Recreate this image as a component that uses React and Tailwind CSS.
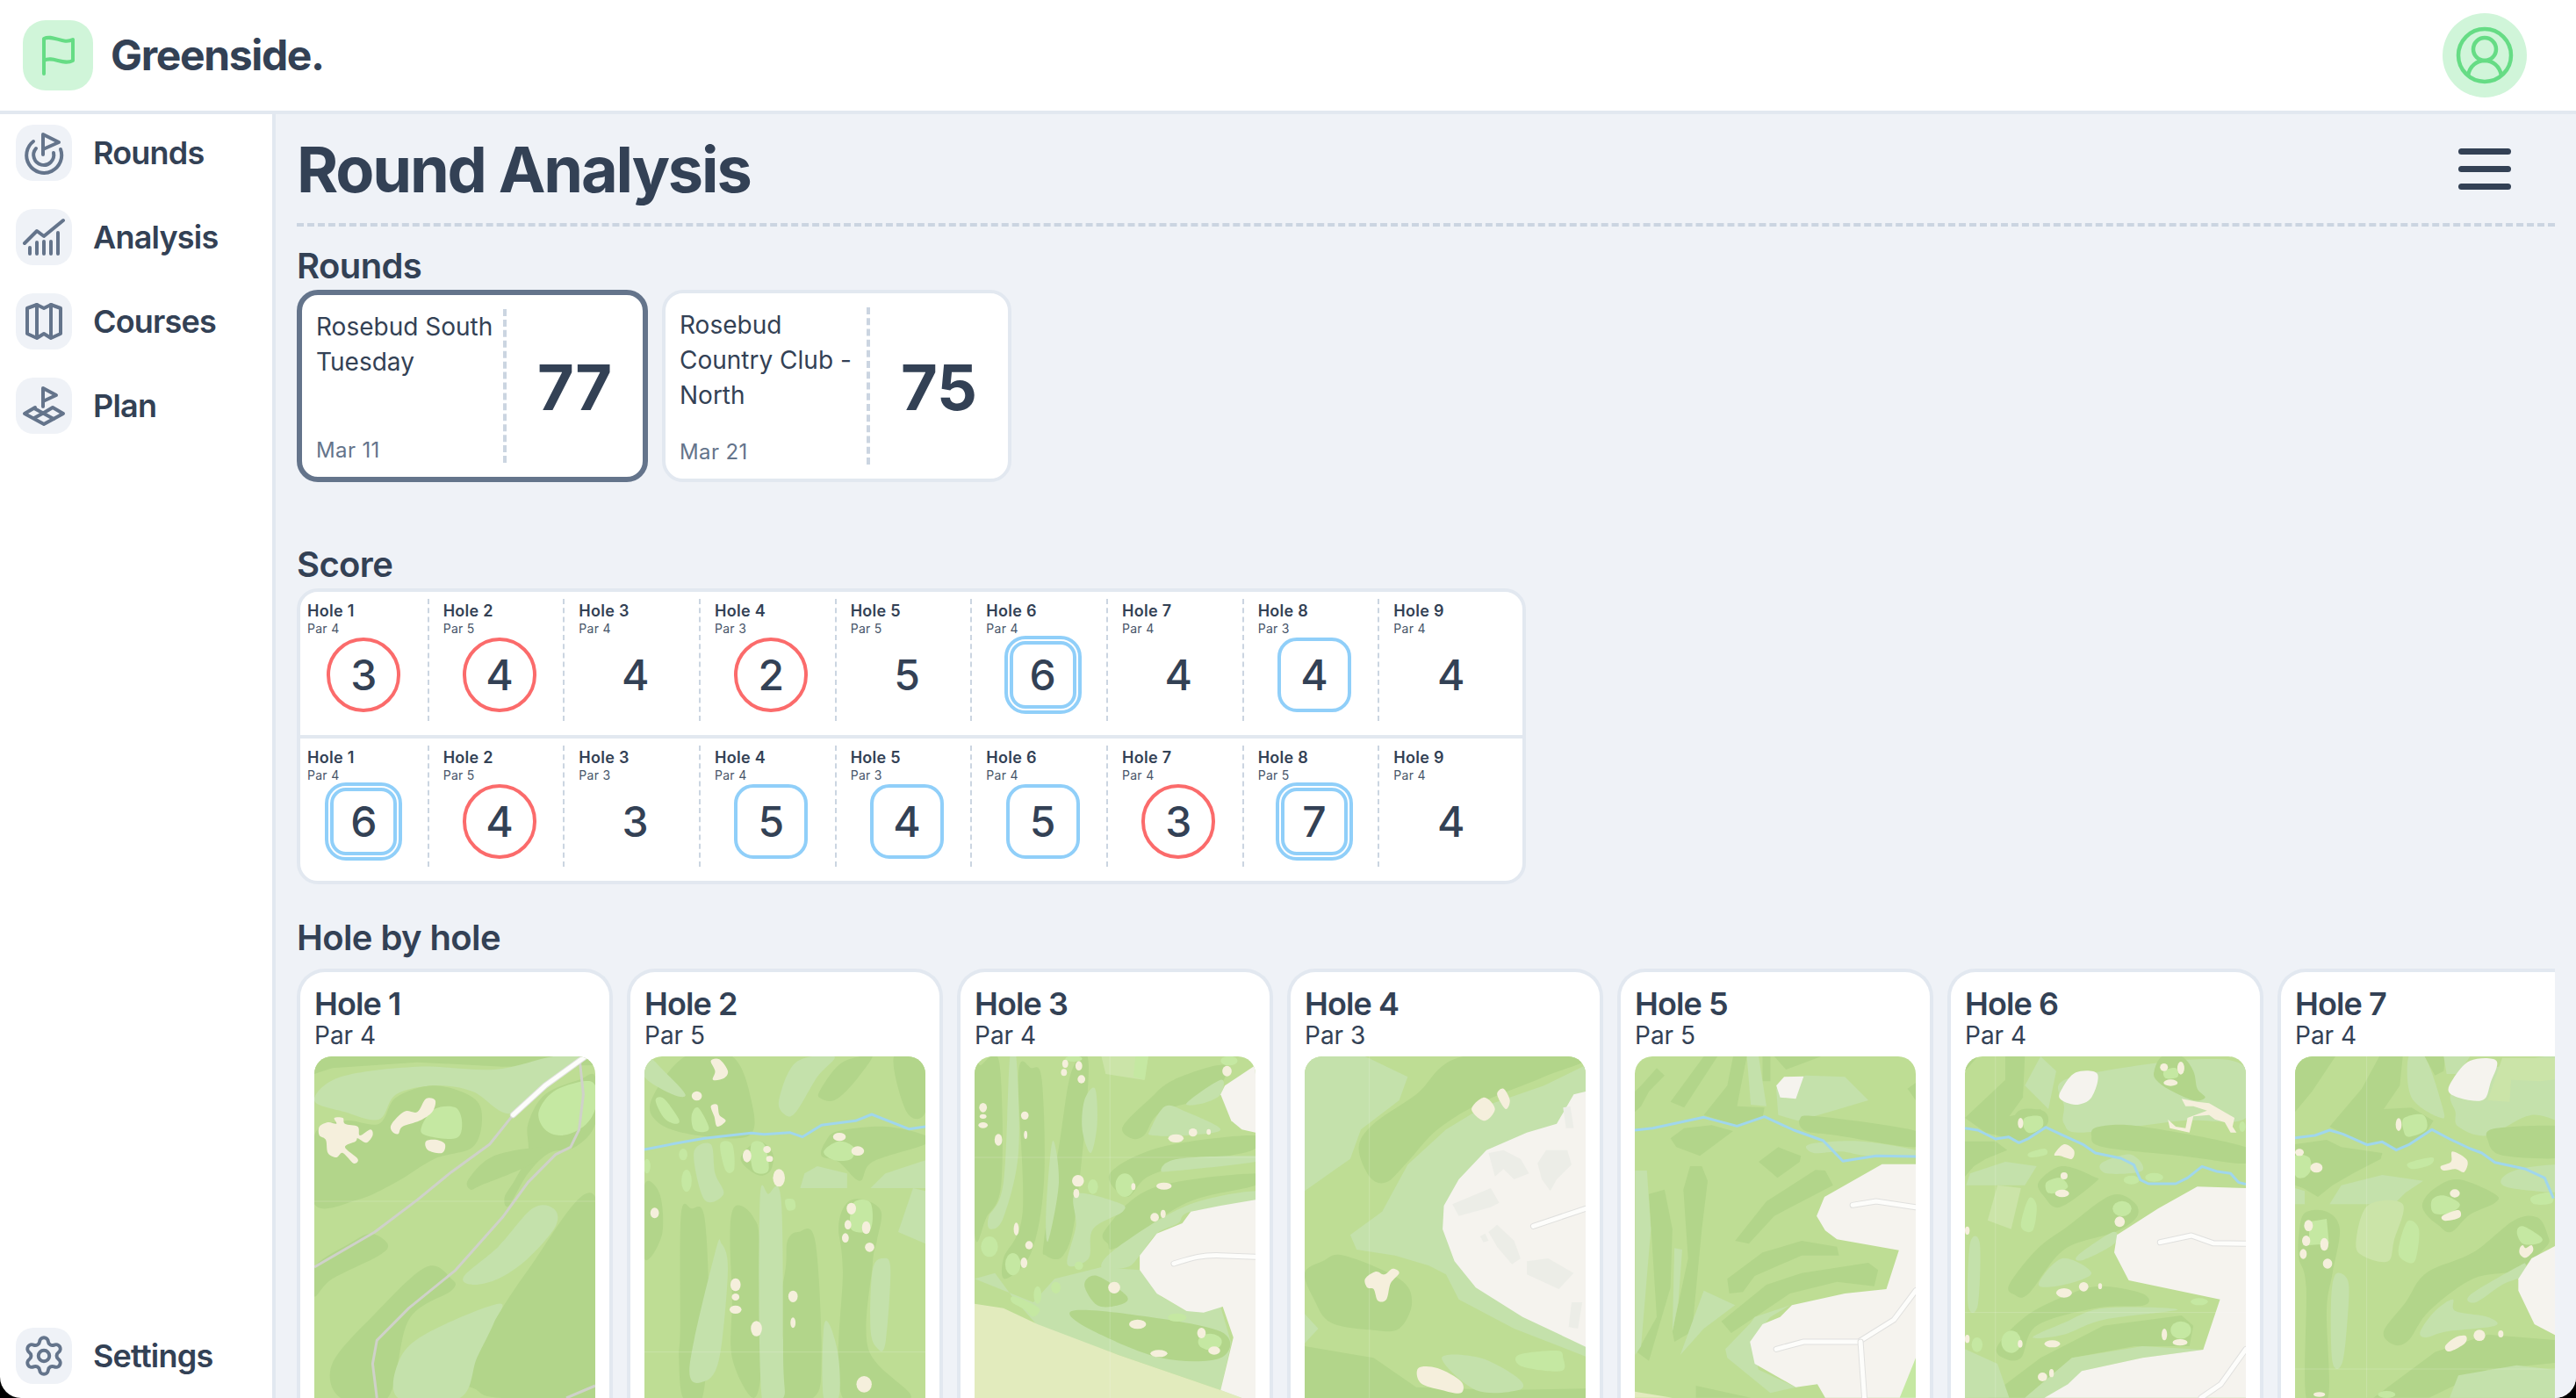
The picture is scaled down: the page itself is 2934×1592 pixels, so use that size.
// App.jsx - Greenside round analysis page
import React from "react";
import { Settings } from "lucide-react";

const COLORS = {
  d: "#b2d58a", // dark rough
  l: "#c4e1ab", // light fairway
  p: "#cbe4a8", // pale patch
  g: "#c5e8a2", // green
  s: "#f5efdc", // sand
  w: "#f5f3ee", // land
  b: "#ecede7", // building
  y: "#e2ebbd", // field
};

// closed catmull-rom through the points so blobs look hand drawn
const smooth = (pts) => {
  const n = pts.length;
  let d = `M${pts[0][0]},${pts[0][1]}`;
  for (let i = 0; i < n; i++) {
    const p0 = pts[(i - 1 + n) % n];
    const p1 = pts[i];
    const p2 = pts[(i + 1) % n];
    const p3 = pts[(i + 2) % n];
    const c1 = [p1[0] + (p2[0] - p0[0]) / 6, p1[1] + (p2[1] - p0[1]) / 6];
    const c2 = [p2[0] - (p3[0] - p1[0]) / 6, p2[1] - (p3[1] - p1[1]) / 6];
    d += `C${c1[0]},${c1[1]} ${c2[0]},${c2[1]} ${p2[0]},${p2[1]}`;
  }
  return d + "Z";
};

const parse = (s) => s.trim().split(/\s+/).map((p) => p.split(",").map(Number));

const HOLE_MAPS = [
  {
    vb: "58 370 660 1167",
    layers: [
      ["d", "58,370 718,370 718,400 500,405 300,390 100,410 58,430", "x"],
      ["l", "58,520 120,440 300,405 480,415 620,370 700,370 620,450 520,565 430,490 340,470 250,500 210,585 130,560"],
      ["d", "58,640 130,590 210,600 250,510 340,470 430,510 452,580 430,680 340,720 250,800 160,860 58,875"],
      ["g", "310,610 340,550 390,545 405,600 390,650 320,640"],
      ["s", "240,600 270,558 300,560 320,515 342,520 335,560 305,590 265,610 255,635 240,625"],
      ["s", "320,660 345,655 365,670 358,700 325,690"],
      ["s", "70,610 90,595 110,600 105,580 125,580 130,600 160,610 165,640 190,620 195,640 180,665 160,650 155,660 130,680 160,720 150,735 125,700 110,715 90,700 85,655 70,640"],
      ["d", "560,600 600,500 680,450 718,440 718,600 670,680 610,700 560,770 515,880 505,850 530,790 560,700"],
      ["g", "585,560 620,490 690,455 718,470 718,550 690,610 640,640 600,620"],
      ["d", "420,790 480,710 600,680 590,720 520,770 450,810 425,825"],
      ["d", "418,1440 560,1100 718,850 718,1537 500,1537 440,1510"],
      ["l", "410,1120 490,1020 570,890 620,890 625,950 560,1060 490,1130 430,1150"],
      ["d", "58,1090 140,1010 190,975 230,1010 210,1050 100,1130 58,1190"],
      ["d", "100,1420 200,1250 320,1090 380,1130 380,1170 280,1270 230,1537 120,1537"],
      ["l", "260,1400 330,1310 490,1215 480,1280 440,1400 400,1537 255,1537"],
    ],
    grey: ["M58,1090 L200,970 L300,860 L380,765 L470,670 L525,570", "M682,390 L690,500 L680,620 L660,680 L625,705 L560,800 L500,920 L390,1100 L280,1230 L205,1340 L195,1420 L205,1537", "M650,1537 L718,1495"],
    roads: ["M525,570 L600,470 L695,370"],
    seams: ["M58,865 H718"],
  },
  {
    vb: "834 370 660 1167",
    layers: [
      ["d", "930,370 1040,370 1085,520 1080,640 960,640 870,600 850,520"],
      ["l", "840,370 880,420 930,500 900,500 834,440"],
      ["l", "1150,520 1190,390 1280,370 1240,440 1190,560 1165,570"],
      ["d", "1245,490 1290,400 1340,370 1370,370 1320,470 1280,520 1250,515"],
      ["d", "1420,370 1494,370 1494,560 1450,560"],
      ["g", "860,520 880,515 915,585 905,600 880,580"],
      ["g", "945,570 960,545 985,610 975,628 950,620"],
      ["s", "990,385 1010,380 1030,420 1020,445 995,450 1000,420"],
      ["s", "990,540 1005,535 1010,570 1025,590 1005,610 998,575"],
      ["d", "1060,720 1100,660 1135,700 1130,760 1100,775"],
      ["g", "1085,670 1115,670 1125,760 1090,760"],
      ["d", "1260,660 1290,625 1400,610 1494,640 1494,670 1370,730 1340,795 1290,730 1250,710"],
      ["g", "1255,695 1290,660 1325,680 1320,720 1280,725"],
      ["l", "1200,820 1210,770 1240,745 1310,770 1310,820", "x"],
      ["l", "1365,820 1400,770 1494,725 1494,820", "x"],
      ["l", "1430,970 1465,820 1494,830 1494,1010", "x"],
      ["l", "950,700 990,670 1000,770 1020,840 975,860"],
      ["g", "1012,670 1040,670 1045,755 1025,760"],
      ["d", "918,1300 920,910 945,890 975,920 985,1250 970,1537 925,1537 915,1400"],
      ["d", "1035,1000 1040,900 1060,880 1090,920 1105,1010 1110,1400 1090,1537 1040,1400 1040,1200"],
      ["d", "1165,1100 1170,1000 1195,970 1235,1000 1250,1400 1230,1537 1130,1537 1140,1300"],
      ["d", "1300,1100 1290,950 1310,870 1350,860 1390,900 1380,1000 1370,1080 1360,1370 1460,1537 1300,1537"],
      ["d", "834,810 870,840 875,980 834,1060"],
      ["l", "1105,870 1125,840 1155,860 1160,1400 1160,1537 1110,1537"],
      ["l", "1000,1040 1015,1010 1030,1100 1010,1400 975,1480 940,1430"],
      ["l", "1370,1100 1395,1060 1412,1100 1400,1350 1380,1365 1365,1300"],
      ["l", "1255,1300 1270,1290 1290,1400 1290,1537 1255,1537"],
      ["g", "1325,870 1365,870 1365,960 1320,960"],
      ["g", "1165,860 1185,860 1188,890 1170,895"],
      ["g", "925,705,10,20 933,795,12,38 840,745,8,25", "o"],
      ["s", "957,505,12,16 1075,710,10,22 1122,688,9,12 1128,720,8,10 1150,785,14,30 1292,645,15,14 1335,693,15,16 858,905,10,18 1048,1150,12,22 1048,1192,9,12 1048,1235,14,14 1097,1300,13,26 1183,1190,11,20 1183,1280,6,18 1350,1490,18,28 1320,890,11,20 1312,945,8,16 1355,955,10,22 1306,990,8,16 1363,1022,11,16", "o"],
    ],
    water: ["M834,688 L905,668 L975,650 L1085,632 L1115,636 L1175,630 L1205,645 L1250,605 L1330,590 L1368,568 L1455,618 L1494,610"],
    seams: ["M834,1380 H1494"],
  },
  {
    vb: "62 370 660 1167",
    layers: [
      ["d", "75,400 120,390 125,800 90,920 62,970 62,380"],
      ["d", "165,430 195,410 220,450 225,800 195,1040 135,1130 130,1060 175,900"],
      ["d", "260,680 290,420 330,400 300,900 270,1050 230,1050 225,1000"],
      ["l", "145,372 160,372 165,700 130,920 100,960 95,920 130,800"],
      ["l", "320,520 345,480 350,600 335,700 315,620"],
      ["l", "245,660 260,800 235,1000 230,900"],
      ["p", "360,370 470,370 460,450 370,430", "x"],
      ["g", "440,370 470,370 462,450 435,440", "x"],
      ["d", "410,610 470,520 530,450 650,400 620,500 500,560 460,640 430,650"],
      ["l", "475,620 510,540 560,560 640,620 560,640 480,640"],
      ["l", "560,530 640,450 640,500 600,530"],
      ["d", "380,770 500,680 715,640 715,690 580,730 470,780 420,850"],
      ["l", "500,760 540,720 722,710 722,730 540,760"],
      ["d", "370,960 480,820 722,770 722,810 560,870 400,1020 375,1010"],
      ["l", "300,840 400,870 410,900 340,960 330,1060 280,1080 300,950"],
      ["l", "400,1020 560,880 722,830 722,870 570,900 540,940 490,975 450,1050 420,1090 360,1090"],
      ["l", "62,1130 110,1110 150,1190 210,1290 400,1390 640,1510 665,1350 640,1225 560,1240 500,1190 450,1100 360,1090 250,1130 200,1210", "x"],
      ["b2", "290,1240 420,1250 640,1310 640,1400 500,1400 330,1300"],
      ["b2", "320,1150 350,1120 420,1190 400,1220 350,1220"],
      ["y", "62,1215 130,1230 210,1285 400,1390 640,1510 690,1537 62,1537", "x"],
      ["w", "722,400 650,470 640,500 665,590 690,620 722,630", "x"],
      ["w", "722,860 640,880 570,900 550,940 490,975 450,1050 450,1100 490,1180 560,1240 600,1245 645,1225 670,1330 640,1510 690,1537 722,1537", "x"],
      ["g", "152,1190 190,1210 215,1235 200,1260 180,1235 150,1210"],
      ["g", "415,810,22,40 97,1020,20,35 152,1080,18,38 340,815,12,25 307,1085,10,14 253,1160,11,20 210,1185,9,30 538,1262,22,14 615,1345,28,28 660,385,20,16 295,378,20,10", "o"],
      ["s", "82,545,9,16 82,575,8,8 82,605,11,10 118,655,9,20 180,572,9,14 182,638,4,14 275,395,7,14 307,402,8,16 272,425,7,12 313,448,9,14 655,420,11,18 535,650,18,14 575,630,10,14 612,628,5,10 305,795,14,20 301,838,7,16 435,815,5,12 507,813,18,12 485,920,10,15 505,908,6,14 160,960,6,22 190,1015,9,14 178,1075,8,18 390,1160,14,20 445,1285,20,16 595,1315,10,18 625,1375,14,14 495,1385,20,12", "o"],
    ],
    roads: ["M530,1078 C570,1060 590,1048 640,1050 L722,1055"],
    seams: ["M380,370 V1537", "M62,715 H722"],
  },
  {
    vb: "838 370 660 1167",
    layers: [
      ["l", "838,370 980,370 1080,440 1060,520 970,620 945,720 838,830", "x"],
      ["d", "965,680 1000,600 1100,500 1210,370 1498,370 1400,440 1250,530 1150,620 1080,730 1030,800 990,780"],
      ["l", "1498,400 1400,470 1260,540 1170,620 1080,740 1020,900 945,980 960,1030 1050,1050 1130,1085 1170,1115 1200,1200 1330,1300 1498,1395", "x"],
      ["w", "1498,490 1470,500 1430,600 1360,630 1265,690 1200,790 1165,880 1162,960 1190,1070 1240,1160 1350,1260 1498,1362", "x"],
      ["b", "1270,700 1305,690 1345,720 1365,770 1330,790 1305,755 1285,780", "x"],
      ["b", "1385,735 1405,690 1455,690 1465,740 1430,790 1415,830 1395,790", "x"],
      ["b", "1185,875 1275,820 1295,870 1275,885 1200,915", "x"],
      ["b", "1270,970 1290,945 1330,1000 1345,1060 1325,1080 1290,1020", "x"],
      ["b", "1360,1070 1410,1060 1470,1110 1435,1165 1360,1115", "x"],
      ["b", "1445,545 1462,540 1470,615 1452,615", "x"],
      ["b", "1465,1210 1490,1210 1480,1300 1458,1295", "x"],
      ["b", "1250,985 1262,975 1270,1000 1258,1005", "x"],
      ["d", "838,1110 880,1070 930,1050 1060,1130 1090,1210 1060,1300 1000,1305 900,1280 860,1200"],
      ["l", "838,1250 870,1300 838,1350", "x"],
      ["d", "838,1360 1000,1400 1100,1500 1300,1510 1498,1505 1498,1537 838,1537", "x"],
      ["l", "1160,1400 1250,1400 1340,1470 1340,1510 1240,1510"],
      ["g", "1340,1390 1430,1375 1445,1400 1440,1445 1350,1430"],
      ["s", "1105,1435 1150,1435 1205,1480 1205,1520 1160,1510 1110,1485"],
      ["s", "980,1130 1005,1105 1025,1115 1045,1095 1060,1110 1040,1145 1030,1200 1010,1205 1000,1165 985,1160"],
      ["s", "1230,550 1260,510 1285,550 1260,590"],
      ["s", "1290,500 1305,480 1320,520 1310,550"],
    ],
    roads: ["M1375,950 L1498,890"],
    seams: ["M990,370 V1537"],
  },
  {
    vb: "4 10 717 1167",
    layers: [
      ["d", "20,110 60,50 80,75 40,130 20,180 4,200 4,130", "x"],
      ["d", "95,165 180,10 215,10 130,185", "x"],
      ["d", "180,210 240,110 255,10 290,10 275,110 265,180 335,185 330,220 270,250", "x"],
      ["d", "330,10 350,10 350,95 330,95", "x"],
      ["d", "360,10 480,10 390,55", "x"],
      ["d", "700,120 721,100 721,160", "x"],
      ["l", "290,10 320,10 340,180 300,175", "x"],
      ["l", "365,120 440,75 540,80 600,160 500,200 420,230 370,210", "x"],
      ["w", "365,110 385,80 435,78 415,155 375,150", "x"],
      ["d", "425,225 470,215 721,265 721,320 520,280 440,265"],
      ["l", "450,310 580,300 721,330 721,350 600,350 530,335 460,340"],
      ["d", "95,290 130,255 200,245 255,265 170,350 110,320", "x"],
      ["d", "320,370 370,320 428,350 425,370 368,425", "x"],
      ["d", "128,465 145,385 175,385 190,435 175,600 150,950 105,985 100,950 140,700", "x"],
      ["d", "40,480 80,465 100,600 95,800 40,1050 10,1020 60,900", "x"],
      ["d", "260,640 340,505 465,398 490,400 510,450 360,555 295,650", "x"],
      ["d", "240,770 330,680 430,640 520,660 525,690 430,690 310,760 280,815 245,820", "x"],
      ["d", "225,915 340,790 430,750 600,715 625,740 615,795 520,780 400,820 250,955", "x"],
      ["l", "5,400 35,400 45,600 20,1000 5,1030", "x"],
      ["l", "105,665 125,670 115,850 100,950", "x"],
      ["l", "120,1030 180,810 260,860 180,940", "x"],
      ["l", "235,1010 300,920 310,900 400,860 350,900 300,980 320,1080 415,1140 350,1160 240,1040", "x"],
      ["w", "635,378 721,378 721,1176 490,1176 470,1130 415,1140 310,1060 298,985 330,925 375,900 405,860 540,820 646,805 678,672 520,635 490,605 468,555 488,490", "x"],
      ["g", "680,1176 721,1040 721,1176", "x"],
      ["d", "160,1135 300,1176 160,1176", "x"],
      ["y", "4,1176 4,1155 100,1176", "x"],
    ],
    water: ["M4,262 L50,255 L180,218 L265,248 L335,216 L410,262 L485,298 L535,368 L620,350 L721,352"],
    roads: ["M560,518 L620,505 L721,525", "M365,1010 L435,985 L575,985 L665,910 L721,810", "M580,985 L590,1176"],
  },
  {
    vb: "847 10 717 1167",
    layers: [
      ["d", "847,10 880,10 847,60", "x"],
      ["d", "847,220 950,90 950,10 1000,10 995,150 960,215 1040,190 1060,230 1020,280 985,300 900,270", "x"],
      ["l", "1040,10 1080,60 1060,190 1000,110", "x"],
      ["l", "1100,180 1090,100 1200,60 1440,20 1564,50 1564,220 1400,230 1150,270 1100,240"],
      ["w", "1095,120 1130,65 1185,70 1170,150 1130,175 1090,155"],
      ["d", "1330,60 1350,10 1400,10 1430,60 1440,120 1460,150 1430,160 1370,125 1335,90"],
      ["g", "1355,60 1385,50 1390,80 1360,85"],
      ["s", "1400,155 1440,165 1470,170 1535,220 1530,250 1540,270 1525,270 1510,235 1485,225 1470,210 1430,215 1420,270 1370,255 1365,225 1385,250 1410,255 1415,220 1465,195 1430,180 1410,180", "x"],
      ["d", "1170,280 1190,250 1300,250 1564,320 1564,375 1400,350 1200,320"],
      ["d", "965,260 985,195 1045,195 1060,230 1040,265 990,300"],
      ["g", "1000,220 1040,215 1045,250 1015,272 998,255"],
      ["d", "847,300 925,300 955,330 900,360 870,385 847,420", "x"],
      ["l", "850,450 860,410 950,370 1030,385 1000,450", "x"],
      ["p", "905,570 930,450 990,460 965,600", "x"],
      ["g", "990,590 1010,495 1030,520 1020,605"],
      ["g", "1010,340 1050,325 1055,345 1015,355"],
      ["s", "1075,345 1100,310 1125,330 1120,360 1090,350"],
      ["l", "1195,375 1270,345 1300,400 1210,410"],
      ["d", "1035,440 1095,385 1175,420 1180,440 1090,525 1050,490"],
      ["g", "1055,440 1090,425 1110,455 1085,475 1058,475"],
      ["d", "960,790 1030,670 1110,590 1220,485 1280,510 1285,560 1230,610 1100,670 1010,820 975,825"],
      ["l", "1135,690 1225,610 1228,650 1150,705"],
      ["l", "1035,790 1095,700 1170,750 1100,790"],
      ["l", "855,860 860,650 885,650 880,860"],
      ["d", "930,1000 1000,900 1100,830 1190,795 1300,820 1305,860 1180,870 1030,930 990,1040 945,1040"],
      ["l", "1020,970 1100,920 1200,870 1390,875 1200,910 1100,960"],
      ["d", "905,1176 1040,1040 1200,930 1400,895 1430,930 1420,1000 1280,1000 1120,1040 1000,1176", "x"],
      ["l", "847,1010 930,1060 960,1176 847,1176", "x"],
      ["l", "1000,1176 1120,1040 1300,1000 1455,1012 1300,1040 1145,1085 1110,1140 1050,1176", "x"],
      ["w", "1440,455 1564,460 1564,1176 1050,1176 1110,1130 1145,1085 1300,1040 1455,1012 1498,840 1265,775 1228,680 1235,620 1340,530", "x"],
      ["g", "1248,530,24,26 1272,432,20,15 1330,423,23,15 965,985,25,38 1398,945,26,30 1445,848,22,12 878,995,14,25 1555,250,8,18", "o"],
      ["s", "1355,47,10,13 1398,50,9,22 1372,100,18,11 989,238,7,18 1100,418,9,12 1095,478,18,13 1242,575,13,18 988,992,6,13 1070,992,20,12 1100,818,20,16 1150,797,12,16 1192,795,5,10 1356,960,7,20 1396,987,19,11 1045,1105,12,15 1068,1092,6,14 853,975,6,14 853,605,6,14", "o"],
    ],
    water: ["M847,255 L880,262 L925,292 L958,285 L985,305 L1010,290 L1053,252 L1090,275 L1150,312 L1180,340 L1245,358 L1278,380 L1295,432 L1315,445 L1385,445 L1415,425 L1452,386 L1490,403 L1525,410 L1545,440 L1564,447"],
    roads: ["M1345,645 L1425,622 L1480,648 L1564,650", "M1564,1010 L1500,1130 L1450,1176"],
    seams: ["M925,10 V1176", "M847,885 H1564"],
  },
  {
    vb: "42 10 960 1167",
    layers: [
      ["d", "42,200 100,130 180,10 42,10", "x"],
      ["d", "160,250 270,120 330,10 410,10 400,110 345,190 440,185 515,230 490,270 430,310 390,330 340,300 290,310 210,275", "x"],
      ["l", "430,10 485,10 545,180 540,220 440,150"],
      ["d", "485,10 555,10 550,60 520,75", "x"],
      ["l", "550,10 640,10 600,70 560,70", "x"],
      ["l", "590,200 580,130 720,50 1002,15 1002,230 850,210 700,280 600,250"],
      ["p", "750,15 1002,15 1002,80 880,95 780,90 775,165 700,160", "x"],
      ["w", "570,135 580,90 640,25 730,25 710,100 690,155 640,160"],
      ["d", "702,300 730,255 1002,255 1002,350 760,350"],
      ["l", "750,425 830,390 1002,385 1002,470 780,460"],
      ["g", "415,220 480,210 490,260 430,285 412,260"],
      ["d", "42,310 150,295 200,320 340,340 335,360 240,410 170,450 120,490 70,460 42,450", "x"],
      ["g", "42,350 90,355 95,400 70,425 42,415"],
      ["l", "42,460 75,470 75,515 42,515", "x"],
      ["l", "160,515 200,450 340,415 480,435 420,475 380,515", "x"],
      ["p", "250,650 290,520 410,515 380,640 360,710 280,695"],
      ["g", "395,680 425,575 465,600 455,700 430,715"],
      ["g", "428,375 510,355 505,380 445,395"],
      ["g", "850,490 915,475 920,510 860,515"],
      ["s", "540,385 575,370 580,335 630,365 620,405 590,395 550,400"],
      ["d", "478,510 520,460 600,430 725,480 725,510 640,550 575,610 530,585 490,550"],
      ["g", "510,500 550,485 605,515 570,545 515,545"],
      ["s", "545,555 600,535 605,560 555,572"],
      ["d", "345,950 420,850 490,750 650,680 790,570 870,560 905,620 900,660 800,740 650,770 500,880 430,980 380,995"],
      ["g", "800,610 820,590 885,630 870,650 820,650"],
      ["s", "810,665 820,655 830,665 850,655 855,675 830,698 810,685"],
      ["l", "640,825 800,730 830,720 820,760 750,790 660,850"],
      ["l", "470,950 520,880 580,840 590,880 700,900 725,930 560,950 490,970"],
      ["w", "1002,620 850,700 805,770 805,810 860,925 1002,1000", "x"],
      ["d", "55,620 75,545 150,540 195,600 170,750 150,880 155,1176 80,1176 80,800 55,700"],
      ["g", "90,575 150,565 158,650 90,655", "x"],
      ["l", "165,850 180,755 220,770 225,850 205,1050 170,1055"],
      ["d", "310,1176 520,1020 700,960 1002,985 1002,1050 700,1080 500,1176", "x"],
      ["l", "570,1176 600,1100 800,1065 1002,1090 1002,1176", "x"],
      ["s", "555,1000 590,970 625,965 622,990 570,1018"],
      ["g", "355,1165,30,12", "o"],
      ["s", "396,243,10,22 57,338,15,12 115,390,21,17 588,478,17,14 88,588,15,19 80,640,14,18 142,652,14,22 70,685,12,17 153,718,16,17 672,963,20,19 745,958,9,12 125,1165,20,8", "o"],
    ],
    water: ["M42,288 L110,280 L160,262 L205,275 L288,312 L340,302 L388,330 L430,312 L510,260 L570,292 L640,325 L680,340 L725,372 L830,395 L895,425 L925,495"],
    seams: ["M287,10 V1176", "M42,1078 H1002"],
  },
];

const HoleMap = ({ map }) => (
  <svg viewBox={map.vb} preserveAspectRatio="none" className="block h-full w-full">
    <rect x="-100" y="-100" width="3000" height="3000" fill="#bedd94" />
    {map.layers.map(([c, pts, mode], i) => {
      const fill = c === "b2" ? COLORS.d : COLORS[c];
      if (mode === "o") {
        return parse(pts).map(([x, y, rx, ry], j) => (
          <ellipse key={`${i}-${j}`} cx={x} cy={y} rx={rx} ry={ry} fill={fill} />
        ));
      }
      if (mode === "x") return <polygon key={i} points={pts} fill={fill} />;
      return <path key={i} d={smooth(parse(pts))} fill={fill} />;
    })}
    {(map.seams || []).map((d, i) => (
      <path key={i} d={d} fill="none" stroke="#ffffff" strokeOpacity="0.18" strokeWidth="1" vectorEffect="non-scaling-stroke" />
    ))}
    {(map.grey || []).map((d, i) => (
      <path key={i} d={d} fill="none" stroke="#cfd1c9" strokeWidth="3" strokeLinejoin="round" vectorEffect="non-scaling-stroke" />
    ))}
    {(map.roads || []).map((d, i) => (
      <g key={i} fill="none" strokeLinecap="round" strokeLinejoin="round">
        <path d={d} stroke="#e0e0de" strokeWidth="7" vectorEffect="non-scaling-stroke" />
        <path d={d} stroke="#fdfdfb" strokeWidth="5" vectorEffect="non-scaling-stroke" />
      </g>
    ))}
    {(map.water || []).map((d, i) => (
      <path key={i} d={d} fill="none" stroke="#a0d6ec" strokeWidth="3" strokeLinejoin="round" vectorEffect="non-scaling-stroke" />
    ))}
  </svg>
);

const iconProps = {
  viewBox: "0 0 64 64",
  fill: "none",
  stroke: "#64748b",
  strokeWidth: 4,
  strokeLinecap: "round",
  strokeLinejoin: "round",
  className: "h-16 w-16",
};

const RoundsIcon = () => (
  <svg {...iconProps}>
    <path d="M31 34V11l18 9-18 8" />
    <path d="M20 19a20 20 0 1 0 31 9" />
    <path d="M23 27a11.500 11.500 0 1 0 20 5" />
  </svg>
);

const AnalysisIcon = () => (
  <svg {...iconProps}>
    <path d="M10 39l14-14 8 6 22-18" />
    <path d="M16 51v-7M24 51V38M32 51V37M40 51V37M48 51V27" />
  </svg>
);

const CoursesIcon = () => (
  <svg {...iconProps}>
    <path d="M13 17l11-4 8 4 8-4 11 4v29l-11 5-8-5-8 5-11-5z" />
    <path d="M24 13v37M40 13v37" />
  </svg>
);

const PlanIcon = () => (
  <svg {...iconProps}>
    <path d="M31 33V12l15 8-15 7" />
    <path d="M22 34L10 41l22 12 22-12-12-7-10 6-11 6" />
    <path d="M21 35l22 12" />
  </svg>
);

const NAV = [
  { label: "Rounds", Icon: RoundsIcon },
  { label: "Analysis", Icon: AnalysisIcon },
  { label: "Courses", Icon: CoursesIcon },
  { label: "Plan", Icon: PlanIcon },
];

const NavItem = ({ label, children }) => (
  <div className="flex items-center gap-[24px]">
    <div className="flex h-16 w-16 items-center justify-center rounded-[20px] bg-[#eff2f7]">{children}</div>
    <span className="text-[36px] leading-[44px] font-semibold tracking-[-0.022em] text-[#334155]">{label}</span>
  </div>
);

// kind: c = circle, s = square, d = double square, undefined = plain
const ROW_ONE = [
  [4, 3, "c"], [5, 4, "c"], [4, 4], [3, 2, "c"], [5, 5], [4, 6, "d"], [4, 4], [3, 4, "s"], [4, 4],
];
const ROW_TWO = [
  [4, 6, "d"], [5, 4, "c"], [3, 3], [4, 5, "s"], [3, 4, "s"], [4, 5, "s"], [4, 3, "c"], [5, 7, "d"], [4, 4],
];

const ScoreBadge = ({ score, kind }) => {
  if (kind === "c") {
    return (
      <div className="flex h-[85px] w-[84px] items-center justify-center rounded-full border-4 border-[#fb6b6b]">
        {score}
      </div>
    );
  }
  if (kind === "s") {
    return (
      <div className="flex h-[85px] w-[84px] items-center justify-center rounded-[22px] border-4 border-[#90cff9]">
        {score}
      </div>
    );
  }
  if (kind === "d") {
    return (
      <div className="h-[89px] w-[88px] shrink-0 rounded-[24px] border-4 border-[#90cff9] p-[2px]">
        <div className="flex h-full w-full items-center justify-center rounded-[18px] border-4 border-[#90cff9]">
          {score}
        </div>
      </div>
    );
  }
  return <div>{score}</div>;
};

const ScoreRow = ({ holes, last }) => (
  <div className={`grid grid-cols-9 pt-2 pb-4 ${last ? "h-[162px]" : "h-[167px] border-b-4 border-[#e2e8f0]"}`}>
    {holes.map(([par, score, kind], i) => (
      <div key={i} className="px-2">
        <div className={`h-full pr-2 ${i < 8 ? "border-r-2 border-dashed border-[#cbd5e1]" : ""}`}>
          <div className="text-[18px] leading-[28px] font-semibold tracking-[0.015em] text-[#334155]">Hole {i + 1}</div>
          <div className="text-[14px] leading-[12px] tracking-[0.02em] text-[#475569]">Par {par}</div>
          <div className="mt-1 flex h-[85px] items-center justify-center text-[48px] leading-none font-medium text-[#334155]">
            <ScoreBadge score={score} kind={kind} />
          </div>
        </div>
      </div>
    ))}
  </div>
);

const RoundCard = ({ name, date, score, selected }) => (
  <div
    className={`flex h-[219px] rounded-[24px] bg-white p-4 ${
      selected ? "w-[400px] border-[6px] border-[#64748b]" : "w-[398px] border-4 border-[#e2e8f0]"
    }`}
  >
    <div className="flex w-[217px] shrink-0 flex-col justify-between border-r-4 border-dashed border-[#cbd5e1] pr-2">
      <div className="text-[28px] leading-[40px] text-[#334155]">
        {name.map((line) => (
          <div key={line}>{line}</div>
        ))}
      </div>
      <div className="text-[24px] leading-[28px] tracking-[0.015em] text-[#64748b]">{date}</div>
    </div>
    <div className="flex flex-1 items-center justify-center pt-0.5 pl-4 text-[72px] leading-none font-bold text-[#334155]">{score}</div>
  </div>
);

const HOLES = [
  { hole: 1, par: 4 },
  { hole: 2, par: 5 },
  { hole: 3, par: 4 },
  { hole: 4, par: 3 },
  { hole: 5, par: 5 },
  { hole: 6, par: 4 },
  { hole: 7, par: 4 },
];

const SectionTitle = ({ className, children }) => (
  <h2 className={`text-[40px] leading-[44px] font-semibold tracking-[-0.015em] text-[#334155] ${className}`}>{children}</h2>
);

export default function App() {
  return (
    <div className="h-screen w-full overflow-hidden bg-black [font-family:Inter,sans-serif]">
      <div className="flex h-full flex-col overflow-hidden rounded-b-[24px] bg-white">
        <header className="flex h-[130px] shrink-0 items-center justify-between border-b-4 border-[#e2e8f0] pr-[56px] pl-[26px]">
          <div className="flex items-center gap-5">
            <div className="flex h-20 w-20 items-center justify-center rounded-[26px] bg-[#d0f5d9]">
              <svg viewBox="0 0 80 80" fill="none" stroke="#66dc85" strokeWidth="4" strokeLinecap="round" strokeLinejoin="round" className="h-20 w-20">
                <path d="M24 61V21C34 16 46 28 57 22V46C46 52 34 40 24 46" />
              </svg>
            </div>
            <span className="text-[48px] leading-none font-bold tracking-[-0.028em] text-[#334155]">Greenside.</span>
          </div>
          <div className="flex h-24 w-24 items-center justify-center rounded-full bg-[#d0f5d9]">
            <svg viewBox="0 0 96 96" fill="none" stroke="#66dc85" strokeWidth="4.500" className="h-24 w-24">
              <circle cx="48" cy="48" r="30" />
              <circle cx="48" cy="41" r="13" />
              <path d="M29 71C31 60 39 54 48 54S65 60 67 71" />
            </svg>
          </div>
        </header>

        <div className="flex min-h-0 flex-1">
          <aside className="flex w-[314px] shrink-0 flex-col justify-between border-r-4 border-[#e2e8f0] pt-3 pb-4 pl-[18px]">
            <nav className="flex flex-col gap-8">
              {NAV.map(({ label, Icon }) => (
                <NavItem key={label} label={label}>
                  <Icon />
                </NavItem>
              ))}
            </nav>
            <NavItem label="Settings">
              <Settings size={50} color="#64748b" strokeWidth={1.9} />
            </NavItem>
          </aside>

          <main className="min-w-0 flex-1 overflow-hidden bg-[#eff2f7] px-6">
            <div className="flex h-[128px] items-center justify-between border-b-4 border-dashed border-[#cbd5e1] pr-[50px]">
              <h1 className="pt-0.5 text-[72px] leading-none font-bold tracking-[-0.03em] text-[#334155]">Round Analysis</h1>
              <div className="flex w-[60px] flex-col gap-[13px]">
                <div className="h-[7px] rounded-full bg-[#334155]" />
                <div className="h-[7px] rounded-full bg-[#334155]" />
                <div className="h-[7px] rounded-full bg-[#334155]" />
              </div>
            </div>

            <SectionTitle className="mt-[23px] mb-[5px]">Rounds</SectionTitle>
            <div className="flex gap-4">
              <RoundCard selected name={["Rosebud South", "Tuesday"]} date="Mar 11" score={77} />
              <RoundCard name={["Rosebud", "Country Club -", "North"]} date="Mar 21" score={75} />
            </div>

            <SectionTitle className="mt-[72px] mb-[5px]">Score</SectionTitle>
            <div className="w-[1400px] rounded-[24px] border-4 border-[#e2e8f0] bg-white">
              <ScoreRow holes={ROW_ONE} />
              <ScoreRow holes={ROW_TWO} last />
            </div>

            <SectionTitle className="mt-[39px] mb-[13px]">Hole by hole</SectionTitle>
            <div className="flex gap-4 overflow-hidden">
              {HOLES.map(({ hole, par }, i) => (
                <div key={hole} className="w-[360px] shrink-0 rounded-t-[32px] border-x-4 border-t-4 border-[#e2e8f0] bg-white px-4 pt-4">
                  <div className="text-[36px] leading-[40px] font-semibold tracking-[-0.025em] text-[#334155]">Hole {hole}</div>
                  <div className="text-[28px] leading-[32px] text-[#334155]">Par {par}</div>
                  <div className="mt-2 h-[389px] w-[320px] overflow-hidden rounded-t-[20px]">
                    <HoleMap map={HOLE_MAPS[i]} />
                  </div>
                </div>
              ))}
            </div>
          </main>
        </div>
      </div>
    </div>
  );
}
